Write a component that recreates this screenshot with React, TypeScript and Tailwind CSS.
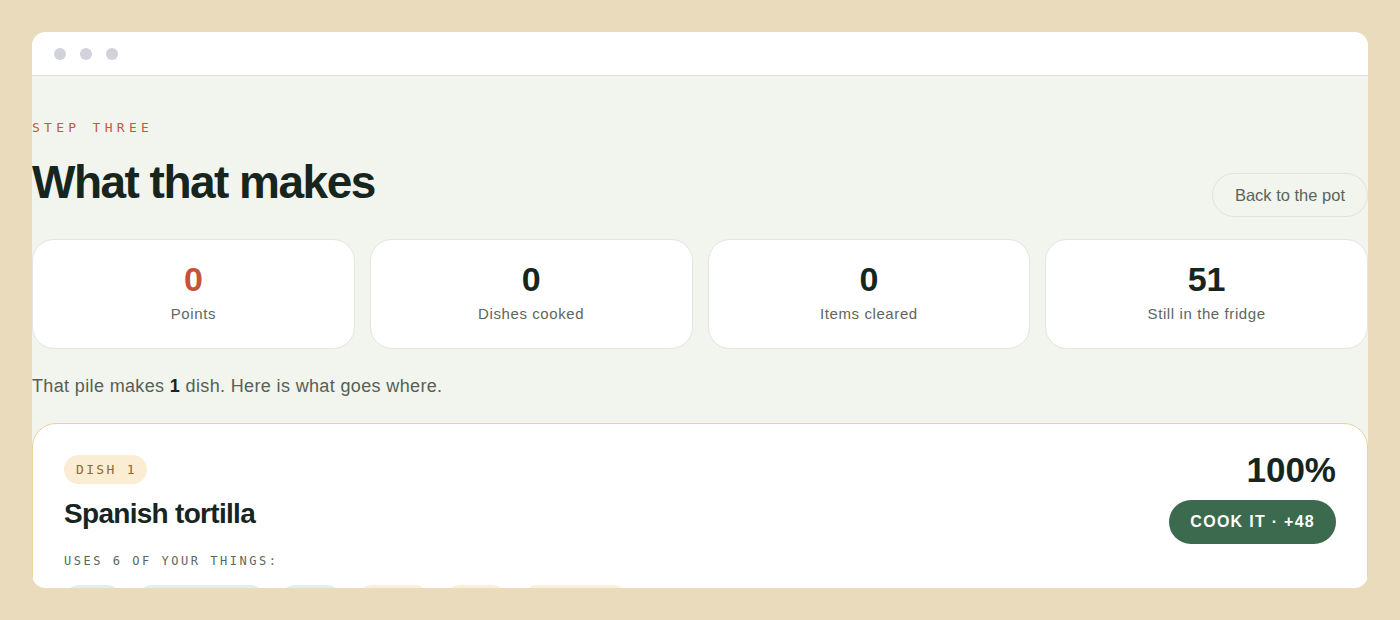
import React from "react";

const stats = [
  { value: "0", label: "Points", accent: true },
  { value: "0", label: "Dishes cooked" },
  { value: "0", label: "Items cleared" },
  { value: "51", label: "Still in the fridge" },
];

const things = [
  { w: 58, tone: "green" },
  { w: 128, tone: "green" },
  { w: 62, tone: "green" },
  { w: 73, tone: "amber" },
  { w: 62, tone: "amber" },
  { w: 106, tone: "amber" },
];

export default function App() {
  const sans = { fontFamily: '"Liberation Sans", Arial, sans-serif' };
  const mono = { fontFamily: '"DejaVu Sans Mono", "Liberation Mono", monospace' };
  return (
    <div className="w-[1400px] h-[620px] bg-[#eadbbd] p-8" style={sans}>
      <div className="h-[556px] rounded-[14px] overflow-hidden bg-[#f2f5ee] flex flex-col">
        <div className="h-[44px] shrink-0 bg-white border-b border-[#dde1da] flex items-center gap-[14px] pl-[22px]">
          <span className="w-3 h-3 rounded-full bg-[#d1d2da]" />
          <span className="w-3 h-3 rounded-full bg-[#d1d2da]" />
          <span className="w-3 h-3 rounded-full bg-[#d1d2da]" />
        </div>
        <div className="flex flex-col pt-[44px]">
          <div className="flex items-end justify-between">
            <div>
              <div className="text-[13px] leading-[16px] tracking-[0.33em] text-[#c4583e]" style={mono}>
                STEP THREE
              </div>
              <h1 className="mt-[18px] text-[46px] leading-[56px] font-bold tracking-[-0.033em] text-[#17251f]">
                What that makes
              </h1>
            </div>
            <button className="mb-[-7px] h-[44px] px-[22px] rounded-full border border-[#dfe3db] bg-[#f2f5ee] text-[16.5px] text-[#5b6459]">
              Back to the pot
            </button>
          </div>
          <div className="mt-[29px] grid grid-cols-4 gap-[15px]">
            {stats.map((s) => (
              <div
                key={s.label}
                className="h-[110px] rounded-[22px] bg-white border border-[#e2e6de] flex flex-col items-center pt-[19px]"
              >
                <div className={`text-[34px] leading-[40px] font-bold ${s.accent ? "text-[#c4533a]" : "text-[#17251f]"}`}>
                  {s.value}
                </div>
                <div className="mt-[6px] text-[15px] leading-[18px] tracking-[0.04em] text-[#5e665c]">{s.label}</div>
              </div>
            ))}
          </div>
          <p className="mt-[25px] text-[18px] leading-[24px] tracking-[0.02em] text-[#566053]">
            That pile makes <b className="text-[#17251f]">1</b> dish. Here is what goes where.
          </p>
          <div className="mt-[25px] rounded-[24px] bg-white border border-[#e6d3a0] px-[31px] pt-[31px] pb-8 flex justify-between">
            <div>
              <span
                className="inline-flex h-[29px] items-center pl-[12px] pr-[10px] rounded-full bg-[#fbedd4] text-[13px] tracking-[0.18em] text-[#8c6a2f]"
                style={mono}
              >
                DISH 1
              </span>
              <h2 className="mt-[13px] text-[28px] leading-[34px] font-bold tracking-[-0.025em] text-[#17251f]">
                Spanish tortilla
              </h2>
              <div className="mt-[22px] text-[12px] leading-[16px] tracking-[0.21em] text-[#5e665c]" style={mono}>
                USES 6 OF YOUR THINGS:
              </div>
              <div className="mt-[16px] flex gap-[15px]">
                {things.map((t, i) => (
                  <span
                    key={i}
                    className={`h-[30px] rounded-full ${t.tone === "green" ? "bg-[#e3eee6]" : "bg-[#fcefd7]"}`}
                    style={{ width: t.w }}
                  />
                ))}
              </div>
            </div>
            <div className="flex flex-col items-end">
              <div className="mt-[-5px] text-[35px] leading-[40px] font-bold text-[#17251f]">100%</div>
              <button className="mt-[10px] h-[44px] px-[21px] rounded-full bg-[#3c6a4e] text-white text-[16px] font-bold tracking-[0.08em]">
                COOK IT · +48
              </button>
            </div>
          </div>
        </div>
      </div>
    </div>
  );
}
